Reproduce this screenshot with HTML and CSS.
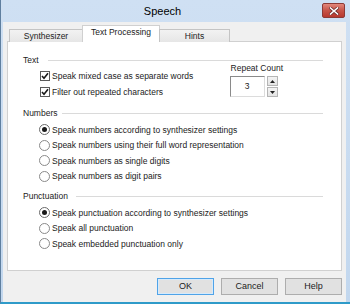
FILE: index.html
```html
<!DOCTYPE html>
<html lang="en">
<head>
  <meta charset="UTF-8">
  <title>Speech</title>
  <link rel="stylesheet" href="styles.css">
</head>
<body>
  <div class="window">
    <!-- Title bar -->
    <div class="titlebar">
      <div class="title">Speech</div>
      <div class="close">
        <svg width="10" height="8" viewBox="0 0 10 8">
          <path d="M1.5 1 L8.5 7 M8.5 1 L1.5 7" stroke="#6b2a2a" stroke-width="3" stroke-linecap="square"/>
          <path d="M1.5 1 L8.5 7 M8.5 1 L1.5 7" stroke="#ffffff" stroke-width="1.6" stroke-linecap="square"/>
        </svg>
      </div>
    </div>

    <div class="client">
      <!-- Tabs -->
      <div class="tabs">
        <div class="tab tab-synth">Synthesizer</div>
        <div class="tab tab-text active">Text Processing</div>
        <div class="tab tab-hints">Hints</div>
      </div>

      <div class="panel">
        <!-- Text -->
        <div class="group">
          <div class="group-head"><span>Text</span><div class="rule"></div></div>
          <div class="text-body">
            <div class="checks">
              <div class="row">
                <span class="check"><svg width="8" height="8" viewBox="0 0 8 8"><path d="M1 4 L3 6.3 L7 1.2" fill="none" stroke="#1a1a1a" stroke-width="1.6"/></svg></span>
                Speak mixed case as separate words
              </div>
              <div class="row">
                <span class="check"><svg width="8" height="8" viewBox="0 0 8 8"><path d="M1 4 L3 6.3 L7 1.2" fill="none" stroke="#1a1a1a" stroke-width="1.6"/></svg></span>
                Filter out repeated characters
              </div>
            </div>
            <div class="repeat">
              <div class="repeat-label">Repeat Count</div>
              <div class="spin">
                <div class="spin-box">3</div>
                <div class="spin-btns">
                  <div class="spin-btn"><svg width="5" height="3" viewBox="0 0 5 3"><path d="M0 3 L2.5 0 L5 3 Z" fill="#222"/></svg></div>
                  <div class="spin-btn"><svg width="5" height="3" viewBox="0 0 5 3"><path d="M0 0 L2.5 3 L5 0 Z" fill="#222"/></svg></div>
                </div>
              </div>
            </div>
          </div>
        </div>

        <!-- Numbers -->
        <div class="group group-numbers">
          <div class="group-head"><span>Numbers</span><div class="rule"></div></div>
          <div class="radios">
            <div class="row radio-row"><span class="radio on"></span>Speak numbers according to synthesizer settings</div>
            <div class="row radio-row"><span class="radio"></span>Speak numbers using their full word representation</div>
            <div class="row radio-row"><span class="radio"></span>Speak numbers as single digits</div>
            <div class="row radio-row"><span class="radio"></span>Speak numbers as digit pairs</div>
          </div>
        </div>

        <!-- Punctuation -->
        <div class="group group-punct">
          <div class="group-head"><span>Punctuation</span><div class="rule"></div></div>
          <div class="radios">
            <div class="row radio-row"><span class="radio on"></span>Speak punctuation according to synthesizer settings</div>
            <div class="row radio-row"><span class="radio"></span>Speak all punctuation</div>
            <div class="row radio-row"><span class="radio"></span>Speak embedded punctuation only</div>
          </div>
        </div>
      </div>

      <!-- Dialog buttons -->
      <div class="buttons">
        <div class="btn default">OK</div>
        <div class="btn">Cancel</div>
        <div class="btn">Help</div>
      </div>
    </div>
  </div>
</body>
</html>
```

FILE: styles.css
```css
/* Global */
body {
  margin: 0;
  font-family: "Liberation Sans", Arial, sans-serif;
  font-size: 8.5px;
  color: #222;
  background: #c4d8ef;
}

.window {
  width: 350px;
  height: 304px;
  box-sizing: border-box;
  display: flex;
  flex-direction: column;
  background: linear-gradient(#cfe0f3, #c2d7ee);
  border-left: 1px solid #5f7f9f;
  border-bottom: 2px solid #2f9bc9;
}

/* Title bar */
.titlebar {
  height: 22px;
  display: flex;
  align-items: flex-start;
}

.title {
  flex: 1;
  text-align: center;
  font-size: 11px;
  line-height: 22px;
  color: #000;
  padding-left: 2px;
}

.close {
  width: 23px;
  height: 15px;
  margin: 3px 5px 0 0;
  box-sizing: border-box;
  border: 1px solid #8c3a36;
  border-radius: 2px;
  background: linear-gradient(#e2877b, #c75448 50%, #b8392f);
  display: flex;
  justify-content: center;
  align-items: center;
}

/* Client area */
.client {
  flex: 1;
  margin-left: 2px;
  margin-right: 4px;
  padding: 4px 4px 0 4px;
  background: #f0f0f0;
  display: flex;
  flex-direction: column;
}

/* Tabs */
.tabs {
  height: 16px;
  display: flex;
  align-items: flex-end;
  padding-left: 2px;
  position: relative;
  z-index: 1;
  margin-bottom: -1px;
}

.tab {
  height: 13px;
  box-sizing: border-box;
  border: 1px solid #c4c4c4;
  border-bottom: none;
  background: linear-gradient(#f2f2f2, #e6e6e6);
  text-align: center;
  line-height: 12px;
}

.tab-synth { width: 74px; }
.tab-text { width: 78px; }
.tab-hints { width: 71px; }

.tab.active {
  height: 17px;
  background: #fff;
  border-color: #d0d0d0;
  line-height: 13px;
  margin: 0 -1px;
}

.panel {
  height: 230px;
  box-sizing: border-box;
  background: #fff;
  border: 1px solid #d0d0d0;
  padding: 11px 18px 0 15px;
}

/* Groups */
.group-head {
  height: 14px;
  display: flex;
  align-items: center;
  gap: 9px;
}

.rule {
  flex: 1;
  height: 1px;
  background: #dadada;
}

.group-numbers .group-head { gap: 5px; margin-top: 6px; }
.group-punct .group-head { gap: 8px; margin-top: 5px; }

.row {
  height: 16px;
  display: flex;
  align-items: center;
  white-space: nowrap;
}

.radio-row {
  height: 15.5px;
}

.radios {
  margin-top: 2px;
  padding-left: 16px;
}

/* Checkboxes */
.text-body {
  display: flex;
  margin-top: 1px;
  padding-left: 17px;
}

.check {
  width: 10px;
  height: 10px;
  box-sizing: border-box;
  border: 1px solid #5a5a5a;
  background: #fff;
  margin-right: 2px;
  display: flex;
  justify-content: center;
  align-items: center;
}

/* Radios */
.radio {
  width: 11px;
  height: 11px;
  box-sizing: border-box;
  border: 1px solid #8a8a8a;
  border-radius: 50%;
  background: #fff;
  margin-right: 2px;
  display: flex;
  justify-content: center;
  align-items: center;
}

.radio.on {
  border-color: #6a6a6a;
}

.radio.on::after {
  content: "";
  width: 5px;
  height: 5px;
  border-radius: 50%;
  background: #1a1a1a;
}

/* Repeat count */
.repeat {
  margin-left: auto;
  margin-right: 40px;
  margin-top: -6px;
}

.repeat-label {
  line-height: 12px;
  padding-left: 1px;
}

.spin {
  display: flex;
  gap: 2px;
  margin-top: 2px;
}

.spin-box {
  width: 35px;
  height: 21px;
  box-sizing: border-box;
  border: 1px solid #dcdcdc;
  border-top-color: #8a8a8a;
  border-left-color: #8a8a8a;
  background: #fff;
  text-align: center;
  line-height: 19px;
}

.spin-btns {
  display: flex;
  flex-direction: column;
  gap: 1px;
}

.spin-btn {
  width: 11px;
  height: 10px;
  box-sizing: border-box;
  border: 1px solid #b5b5b5;
  background: linear-gradient(#f4f4f4, #e4e4e4);
  display: flex;
  justify-content: center;
  align-items: center;
}

/* Buttons */
.buttons {
  display: flex;
  justify-content: flex-end;
  gap: 7px;
  margin-top: 7px;
}

.btn {
  width: 57px;
  height: 17px;
  box-sizing: border-box;
  border: 1px solid #adadad;
  background: #e1e1e1;
  text-align: center;
  line-height: 15px;
  font-size: 9px;
}

.btn.default {
  border-color: #4fa3e8;
  box-shadow: inset 0 0 0 1px #d6eafb;
}
```
